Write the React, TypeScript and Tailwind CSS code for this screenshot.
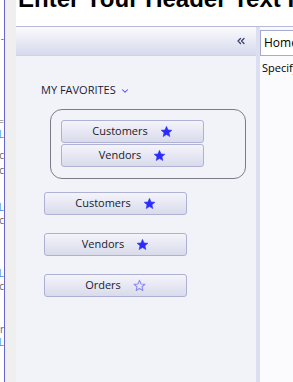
import { ChevronDown, ChevronsLeft } from "lucide-react"

function Star({ filled }: { filled: boolean }) {
  return (
    <svg width="13" height="13" viewBox="0 0 24 24" className="shrink-0">
      <path
        d="M12 2.5l2.9 6.6 7.1.6-5.4 4.7 1.6 7-6.2-3.7-6.2 3.7 1.6-7L2 9.7l7.1-.6z"
        fill={filled ? "#2b2bff" : "none"}
        stroke={filled ? "#2b2bff" : "#8a86f0"}
        strokeWidth={filled ? 1 : 2}
        strokeLinejoin="round"
      />
    </svg>
  )
}

function FavButton({ label, filled, className = "" }: { label: string; filled: boolean; className?: string }) {
  return (
    <div
      className={`w-[143px] h-[23px] flex items-center justify-center gap-3 rounded-[3px] border border-[#aeb0d4] bg-gradient-to-b from-[#f4f4fa] to-[#d9dbeb] text-[11px] text-[#1a1a2e] ${className}`}
    >
      <span>{label}</span>
      <Star filled={filled} />
    </div>
  )
}

export default function App() {
  return (
    <div className="w-[293px] h-[382px] overflow-hidden flex bg-white" style={{ fontFamily: '"Open Sans", "Noto Sans", sans-serif' }}>
      <div className="w-[4px] overflow-hidden shrink-0 text-[10px] leading-[13px] text-[#666] relative">
        <div className="absolute right-0 top-[32px] text-right">
          <div>-</div>
          <div className="mt-[70px]">=</div>
          <div className="text-[#4a90d9]">L</div>
          <div className="mt-[8px]">c</div>
          <div className="mt-[2px]">c</div>
          <div className="mt-[24px] text-[#4a90d9]">L</div>
          <div>c</div>
          <div className="mt-[40px] text-[#4a90d9]">L</div>
          <div>c</div>
          <div className="mt-[30px]">r</div>
          <div className="text-[#4a90d9]">L</div>
        </div>
      </div>
      <div className="w-px shrink-0 bg-[#6a64c4]" />
      <div className="w-[11px] shrink-0 bg-[#efefef]" />
      <div className="flex-1 min-w-0 flex flex-col">
        <div className="h-[27px] shrink-0 overflow-hidden border-b border-[#b6b9d8] bg-white">
          <div
            className="mt-[-19px] ml-[2px] whitespace-nowrap text-[24px] font-bold text-black"
            style={{ fontFamily: '"Liberation Sans", Arial, sans-serif' }}
          >
            Enter Your Header Text Here
          </div>
        </div>
        <div className="flex-1 flex min-h-0">
          <div className="w-[240px] shrink-0 flex flex-col bg-[#f2f3f8]">
            <div className="h-[29px] shrink-0 flex items-center justify-end pr-[9px] bg-gradient-to-b from-[#fbfbfd] to-[#d6d9ec] border-b border-[#d0d3e6]">
              <ChevronsLeft size={12} strokeWidth={2.5} className="text-[#3a3f6a]" />
            </div>
            <div className="pl-[25px] pt-[26px] flex items-center gap-1 text-[11px] text-[#1a1a3a]">
              <span>MY FAVORITES</span>
              <ChevronDown size={10} strokeWidth={2.5} className="text-[#4a44ff] mt-[2px]" />
            </div>
            <div className="ml-[34px] mt-[10px] w-[196px] h-[70px] rounded-[12px] border border-[#7c7c88] pl-[10px] pt-[10px] flex flex-col gap-px">
              <FavButton label="Customers" filled />
              <FavButton label="Vendors" filled />
            </div>
            <div className="ml-[28px] mt-[13px] flex flex-col gap-[18px]">
              <FavButton label="Customers" filled />
              <FavButton label="Vendors" filled />
              <FavButton label="Orders" filled={false} />
            </div>
          </div>
          <div className="w-[4px] shrink-0 bg-[#dcdff0]" />
          <div className="flex-1 min-w-0 flex flex-col bg-[#fbfbfe]">
            <div className="h-[29px] shrink-0 bg-gradient-to-b from-[#fbfbfd] to-[#d6d9ec] pt-[3px] border-b border-[#d0d3e6]">
              <div className="h-[26px] bg-white border border-[#a6aad0] border-r-0 pl-[3px] pt-[3px] text-[12px] text-black whitespace-nowrap">
                Home
              </div>
            </div>
            <div className="pl-[2px] pt-[4px] text-[11px] text-black whitespace-nowrap">Specify</div>
          </div>
        </div>
      </div>
    </div>
  )
}
